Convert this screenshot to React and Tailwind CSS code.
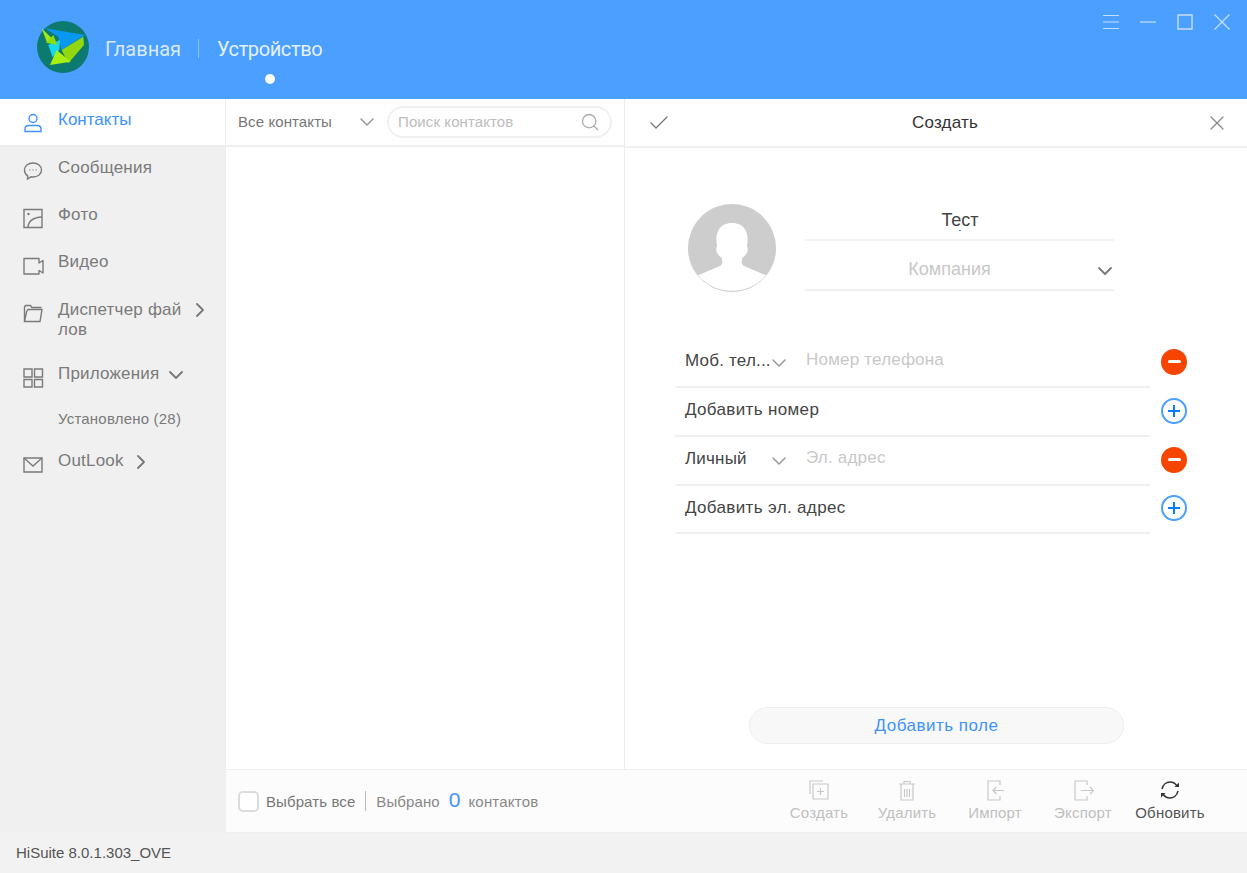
import React from 'react';
import { ChevronDown, ChevronRight, Check, X, Search } from 'lucide-react';

const Svg = ({ size = 22, strokeWidth = 1.4, className = '', children }) => (
  <svg width={size} height={size} viewBox="0 0 22 22" fill="none" stroke="currentColor" strokeWidth={strokeWidth} className={className}>
    {children}
  </svg>
);

const Logo = () => (
  <svg width="54" height="54" viewBox="0 0 54 54" className="shrink-0">
    <circle cx="27" cy="27" r="26" fill="#0d7a70" />
    <polygon points="9,8.300 49,15 25.700,30 22.300,16.700" fill="#0a97f0" />
    <polygon points="12.300,25 24,20 23.300,30 16.700,37.300" fill="#16d6f0" />
    <polygon points="5.700,8.300 20.700,23.300 10.700,21.700" fill="#a4ea12" />
    <polygon points="10,22.700 17.300,15 21.300,25" fill="#8fdc10" />
    <polygon points="25.700,30 47.300,16.700 48,25 32.300,43.300" fill="#93d80e" />
    <polygon points="14,45 20.700,30 34.700,41.700" fill="#a8f010" />
  </svg>
);

const NavItem = ({ icon, label, arrow, className = '' }) => (
  <div className={`flex items-start text-[17px] leading-5 tracking-[0.2px] text-[#7a7a7a] pl-[22px] ${className}`}>
    <Svg className="shrink-0 mt-[2px]">{icon}</Svg>
    <span className="ml-[14px]">{label}</span>
    {arrow}
  </div>
);

const TypeRow = ({ type, placeholder }) => (
  <div className="flex items-center">
    <div className="flex items-start w-[475px] h-[49px] border-b-2 border-[#f0f0f0] pl-[10px] pt-[12px] text-[17px] leading-5 tracking-[0.2px]">
      <span className="w-[82px] whitespace-nowrap text-[#444]">{type}</span>
      <ChevronDown size={24} strokeWidth={1.5} className="text-[#999] shrink-0" />
      <span className="ml-[15px] -mt-[1px] whitespace-nowrap text-[#c8c8c8]">{placeholder}</span>
    </div>
    <div className="ml-[11px] -mt-[4px] w-[26px] h-[26px] rounded-full bg-[#f54500] flex items-center justify-center">
      <div className="w-[13px] h-[3px] bg-white rounded-sm" />
    </div>
  </div>
);

const AddRow = ({ label, className = 'h-[49px]' }) => (
  <div className="flex items-center">
    <div className={`w-[475px] border-b-2 border-[#f0f0f0] pl-[10px] pt-[12px] text-[17px] leading-5 tracking-[0.35px] text-[#444] ${className}`}>{label}</div>
    <div className="ml-[11px] -mt-[4px] w-[26px] h-[26px] rounded-full border-2 border-[#4a9fff] flex items-center justify-center text-[#0a7bff]">
      <svg width="14" height="14" viewBox="0 0 14 14" stroke="currentColor" strokeWidth="2"><path d="M7 1v12M1 7h12" /></svg>
    </div>
  </div>
);

const Tool = ({ icon, label, active, className = '' }) => (
  <div className={`flex flex-col items-center w-[88px] ${active ? 'text-[#555]' : 'text-[#c0c0c0]'} ${className}`}>
    <Svg size={22} strokeWidth={1.2} className={active ? 'text-[#333]' : 'text-[#c8c8c8]'}>{icon}</Svg>
    <span className="text-[15px] leading-5 tracking-[0.2px] mt-[2px] whitespace-nowrap">{label}</span>
  </div>
);

export default function App() {
  return (
    <div className="w-[1247px] h-[873px] flex flex-col overflow-hidden bg-white font-['Liberation_Sans','Roboto',sans-serif]">
      <header className="h-[99px] shrink-0 bg-[#4a9fff] flex relative font-['Roboto','Liberation_Sans',sans-serif]">
        <div className="flex items-start pl-[36px] pt-[20px]">
          <Logo />
          <span className="ml-[15px] mt-[17px] text-[20px] leading-6 text-[#dbeaff]">Главная</span>
          <div className="ml-[17px] mt-[19px] w-px h-[19px] bg-[#8fc3ff]" />
          <div className="ml-[18px] mt-[17px] flex flex-col items-center">
            <span className="text-[20px] leading-6 tracking-[-0.4px] text-[#e6f1ff]">Устройство</span>
            <div className="w-[10px] h-[10px] rounded-full bg-white mt-[13px]" />
          </div>
        </div>
        <div className="absolute top-[13px] right-[17px] flex items-center gap-[21px] text-[#c5e0ff]">
          <svg width="16" height="18" viewBox="0 0 16 18" stroke="currentColor" strokeWidth="1.2"><path d="M0 2.500h16M0 9h16M0 15.500h16" /></svg>
          <svg width="16" height="18" viewBox="0 0 16 18" stroke="currentColor" strokeWidth="1.2"><path d="M0 9h16" /></svg>
          <svg width="16" height="18" viewBox="0 0 16 18" fill="none" stroke="currentColor" strokeWidth="1.4"><path d="M1 2h14v14H1z" /></svg>
          <svg width="16" height="18" viewBox="0 0 16 18" stroke="currentColor" strokeWidth="1.2"><path d="M0.500 1.500l15 15M15.500 1.500l-15 15" /></svg>
        </div>
      </header>

      <div className="flex flex-1 min-h-0">
        <aside className="w-[225px] shrink-0 bg-[#f0f0f0] flex flex-col">
          <div className="h-[48px] bg-white border-b-2 border-[#ececec] flex items-start pl-[22px] pt-[11px] text-[17px] leading-5 text-[#3d93ff]">
            <Svg className="mt-[2px]">
              <circle cx="11" cy="6.500" r="4" />
              <path d="M3 19.500v-2.500c0-2 1.500-3.500 4-3.500h8c2.500 0 4 1.500 4 3.500v2.500z" />
            </Svg>
            <span className="ml-[14px]">Контакты</span>
          </div>
          <NavItem
            className="mt-[11px]"
            label="Сообщения"
            icon={
              <>
                <path d="M11 3c5 0 8.500 3 8.500 7s-3.500 7-8.500 7c-.8 0-1.500-.1-2-.2L5.500 19l.2-3.200C3.700 14.500 2.500 12.500 2.500 10c0-4 3.500-7 8.500-7z" />
                <path d="M7.500 10h.8M10.600 10h.8M13.700 10h.8" />
              </>
            }
          />
          <NavItem
            className="mt-[23px]"
            label="Фото"
            icon={
              <>
                <path d="M2 2.500h18v18H2z" />
                <path d="M6 20c.5-5.500 5-9.500 14-10" />
                <circle cx="6.500" cy="7" r="1.200" fill="currentColor" stroke="none" />
              </>
            }
          />
          <NavItem
            className="mt-[23px]"
            label="Видео"
            icon={<path d="M21 6.500V19l-4-2.500V20H2V4.500h15v4.500z" strokeLinejoin="round" />}
          />
          <NavItem
            className="mt-[24px]"
            label={<>Диспетчер фай<br />лов</>}
            arrow={<ChevronRight size={24} strokeWidth={1.8} className="text-[#777] ml-[7px] -mt-[2px]" />}
            icon={
              <>
                <path d="M2.500 19.500V5l1-1.500h5L10 5.500h9.500" />
                <path d="M2.500 19.500h15.500l2-12H6l-1.500 2.500z" />
              </>
            }
          />
          <NavItem
            className="mt-[24px]"
            label="Приложения"
            arrow={<ChevronDown size={24} strokeWidth={1.8} className="text-[#777] ml-[5px] -mt-[1px]" />}
            icon={<path d="M2 3h8v8H2zM12.500 3h8v8h-8zM2 13.500h8v7.500H2zM12.500 13.500h8v7.500h-8z" />}
          />
          <div className="pl-[58px] mt-[23px] text-[15px] leading-4 tracking-[0.2px] text-[#7a7a7a]">Установлено (28)</div>
          <NavItem
            className="mt-[24px]"
            label="OutLook"
            arrow={<ChevronRight size={24} strokeWidth={1.8} className="text-[#777] ml-[5px] -mt-[1px]" />}
            icon={
              <>
                <path d="M2 5h18v14H2z" />
                <path d="M2 5l9 8 9-8" />
              </>
            }
          />
        </aside>

        <main className="flex-1 min-w-0 flex flex-col">
          <div className="flex flex-1 min-h-0">
            <section className="w-[400px] shrink-0 border-x border-[#ececec]">
              <div className="h-[48px] border-b-2 border-[#f0f0f0] flex items-center pl-[12px]">
                <span className="w-[117px] mt-[1px] text-[15px] tracking-[0.1px] whitespace-nowrap text-[#777]">Все контакты</span>
                <ChevronDown size={24} strokeWidth={1.5} className="text-[#999] shrink-0" />
                <div className="ml-[8px] w-[225px] h-[32px] rounded-full border-2 border-[#f0f0f0] flex items-center justify-between pl-[9px] pr-[10px]">
                  <span className="text-[15px] tracking-[0.1px] whitespace-nowrap text-[#bdbdbd]">Поиск контактов</span>
                  <Search size={20} strokeWidth={1.6} className="text-[#aaa]" />
                </div>
              </div>
            </section>

            <section className="flex-1 min-w-0 flex flex-col">
              <div className="h-[49px] shrink-0 border-b-2 border-[#f0f0f0] flex items-center justify-between pl-[22px] pr-[18px]">
                <Check size={24} strokeWidth={1.3} className="text-[#777]" />
                <span className="text-[17px] tracking-[0.2px] text-[#333] ml-[14px] mt-[1px]">Создать</span>
                <X size={24} strokeWidth={1.2} className="text-[#888]" />
              </div>

              <div className="flex pl-[63px] pt-[56px]">
                <div className="w-[88px] h-[88px] rounded-full bg-[#cdcdcd] overflow-hidden border-b border-[#ccc]">
                  <svg width="88" height="88" viewBox="0 0 88 88">
                    <path d="M6 73l26-11c3-2 3-6 1-9-4-2-6-7-4-11-1-6-1-10 1-15 3-6 8-8 14-8s11 2 14 8c2 5 2 9 1 15 2 4 0 9-4 11-2 3-2 7 1 9l26 11v15H6z" fill="#fff" />
                  </svg>
                </div>
                <div className="ml-[29px] w-[309px]">
                  <div className="h-[37px] border-b-2 border-[#f0f0f0] text-center relative pl-[1px] pt-[6px] text-[18px] leading-5 text-[#444]">
                    Тест
                    <div className="absolute left-[154px] top-[26px] w-[2px] h-[1px] bg-[#3d93ff]" />
                  </div>
                  <div className="h-[50px] border-b-2 border-[#f0f0f0] relative text-center pt-[18px] pr-[20px] text-[18px] leading-5 text-[#c8c8c8]">
                    Компания
                    <ChevronDown size={24} strokeWidth={1.8} className="absolute right-[-3px] top-[18px] text-[#777]" />
                  </div>
                </div>
              </div>

              <div className="pl-[50px] mt-[47px] flex flex-col">
                <TypeRow type="Моб. тел..." placeholder="Номер телефона" />
                <AddRow label="Добавить номер" />
                <TypeRow type="Личный" placeholder="Эл. адрес" />
                <AddRow label="Добавить эл. адрес" className="h-[48px]" />
              </div>

              <div className="mt-auto mb-[25px] flex justify-center pr-[1px] pl-[2px]">
                <div className="w-[375px] h-[37px] rounded-full bg-[#f8f8f8] border border-[#eeeeee] flex items-center justify-center text-[17px] tracking-[0.5px] text-[#3d93ff]">
                  Добавить поле
                </div>
              </div>
            </section>
          </div>

          <div className="h-[64px] shrink-0 bg-[#fcfcfc] border-t border-b border-l border-[#efefef] flex items-center pl-[12px]">
            <div className="w-[21px] h-[21px] rounded-[5px] border-2 border-[#dcdcdc] bg-white shrink-0" />
            <span className="ml-[7px] mt-[2px] text-[15px] tracking-[0.1px] whitespace-nowrap text-[#777]">Выбрать все</span>
            <div className="ml-[10px] w-px h-[20px] bg-[#bbb]" />
            <span className="ml-[10px] mt-[2px] text-[15px] tracking-[0.1px] whitespace-nowrap text-[#888]">Выбрано</span>
            <span className="ml-[9px] text-[21px] leading-5 -mt-[3px] text-[#3d93ff]">0</span>
            <span className="ml-[8px] mt-[2px] text-[15px] tracking-[0.2px] whitespace-nowrap text-[#888]">контактов</span>
            <div className="ml-auto flex pr-[33px]">
              <Tool
                label="Создать"
                icon={
                  <>
                    <path d="M2 15V2h13" />
                    <path d="M5 5h15v15H5z" />
                    <path d="M12.500 9v7M9 12.500h7" />
                  </>
                }
              />
              <Tool
                label="Удалить"
                icon={
                  <>
                    <path d="M3 5h16M8 5V2.500h6V5M5 5v16h12V5" />
                    <path d="M8.500 10v8M11 10v8M13.500 10v8" />
                  </>
                }
              />
              <Tool
                label="Импорт"
                icon={
                  <>
                    <path d="M16 6V2H4v19h12v-4" />
                    <path d="M20 11.500H9M12.500 8l-3.500 3.500 3.500 3.500" />
                  </>
                }
              />
              <Tool
                label="Экспорт"
                icon={
                  <>
                    <path d="M15 6V2H3v19h12v-4" />
                    <path d="M9 11.500h12M18 8l3.500 3.500-3.500 3.500" />
                  </>
                }
              />
              <Tool
                active
                className="-ml-[1px]"
                label="Обновить"
                icon={
                  <>
                    <path d="M3 10C4 5.500 7.500 3 11 3c3 0 5.500 1.500 7 4" strokeWidth="1.500" />
                    <path d="M19 12c-1 4.500-4.500 7-8 7-3 0-5.500-1.500-7-4" strokeWidth="1.500" />
                    <path d="M20 3.500V8h-4.500z" fill="currentColor" stroke="none" />
                    <path d="M2 18.500V14h4.500z" fill="currentColor" stroke="none" />
                  </>
                }
              />
            </div>
          </div>
        </main>
      </div>

      <footer className="h-[40px] shrink-0 bg-[#f2f2f2] flex items-center pl-[16px] pt-[1px] text-[15px] text-[#555]">HiSuite 8.0.1.303_OVE</footer>
    </div>
  );
}
